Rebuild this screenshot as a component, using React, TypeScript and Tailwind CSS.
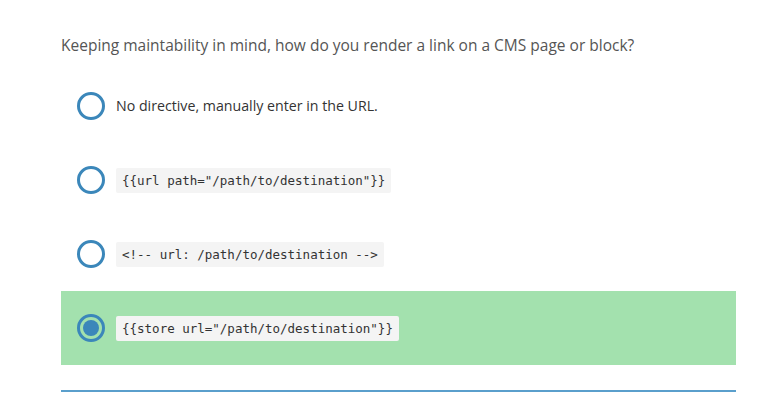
import React from "react";

const options = [
  { text: "No directive, manually enter in the URL.", code: false, selected: false },
  { text: '{{url path="/path/to/destination"}}', code: true, selected: false },
  { text: "<!-- url: /path/to/destination -->", code: true, selected: false },
  { text: '{{store url="/path/to/destination"}}', code: true, selected: true },
];

function Radio({ selected }: { selected: boolean }) {
  return (
    <div className="w-[28px] h-[28px] rounded-full border-[3px] border-[#3b87ba] flex items-center justify-center shrink-0">
      {selected && <div className="w-[16px] h-[16px] rounded-full bg-[#3b87ba]" />}
    </div>
  );
}

export default function App() {
  return (
    <div className="w-[779px] h-[418px] bg-white pl-[61px] pt-[35px]" style={{ fontFamily: "'Open Sans', Lato, sans-serif" }}>
      <div className="w-[675px]">
        <div className="text-[15.5px] leading-[20px] text-[#555555]">
          Keeping maintability in mind, how do you render a link on a CMS page or block?
        </div>
        <div className="mt-[14px] flex flex-col">
          {options.map((o, i) => (
            <div
              key={i}
              className={`h-[74px] flex items-center pl-[16px] gap-[11px] ${o.selected ? "bg-[#a3e1ae]" : ""}`}
            >
              <Radio selected={o.selected} />
              {o.code ? (
                <span
                  className="bg-[#f4f4f4] h-[25px] leading-[25px] px-[6px] text-[12.5px] text-[#333333] rounded-[2px]"
                  style={{ fontFamily: "'DejaVu Sans Mono', 'Liberation Mono', monospace" }}
                >
                  {o.text}
                </span>
              ) : (
                <span className="text-[14.2px] text-[#333333]">{o.text}</span>
              )}
            </div>
          ))}
        </div>
        <div className="mt-[25px] h-[2px] bg-[#5a9fcc]" />
      </div>
    </div>
  );
}
